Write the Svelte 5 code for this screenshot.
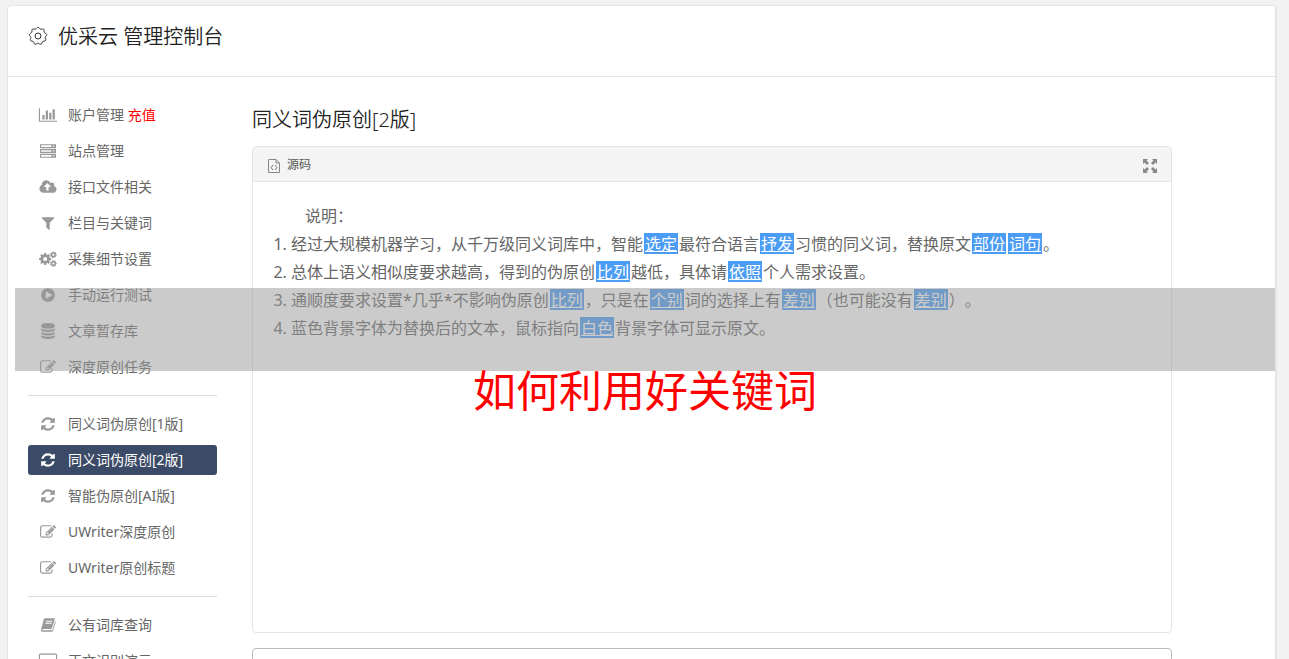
<script lang="ts">
	type Item = { icon: string; label: string; extra?: string; active?: boolean };

	const groups: Item[][] = [
		[
			{ icon: 'chart', label: '账户管理', extra: '充值' },
			{ icon: 'server', label: '站点管理' },
			{ icon: 'cloud', label: '接口文件相关' },
			{ icon: 'filter', label: '栏目与关键词' },
			{ icon: 'cogs', label: '采集细节设置' },
			{ icon: 'play', label: '手动运行测试' },
			{ icon: 'database', label: '文章暂存库' },
			{ icon: 'edit', label: '深度原创任务' }
		],
		[
			{ icon: 'refresh', label: '同义词伪原创[1版]' },
			{ icon: 'refresh', label: '同义词伪原创[2版]', active: true },
			{ icon: 'refresh', label: '智能伪原创[AI版]' },
			{ icon: 'edit', label: 'UWriter深度原创' },
			{ icon: 'edit', label: 'UWriter原创标题' }
		],
		[
			{ icon: 'book', label: '公有词库查询' },
			{ icon: 'desktop', label: '正文识别演示' }
		]
	];

	// odd entries of each line are the replaced words
	const lines = [
		['经过大规模机器学习，从千万级同义词库中，智能', '选定', '最符合语言', '抒发', '习惯的同义词，替换原文', '部份', '', '词句', '。'],
		['总体上语义相似度要求越高，得到的伪原创', '比列', '越低，具体请', '依照', '个人需求设置。'],
		['通顺度要求设置*几乎*不影响伪原创', '比列', '，只是在', '个别', '词的选择上有', '差别', '（也可能没有', '差别', '）。'],
		['蓝色背景字体为替换后的文本，鼠标指向', '白色', '背景字体可显示原文。']
	];

	function gear(cx: number, cy: number, r: number, depth: number, teeth: number, hole: number) {
		const pts: string[] = [];
		const step = (Math.PI * 2) / teeth;
		for (let i = 0; i < teeth; i++) {
			for (const [f, d] of [[-0.32, depth], [-0.2, 0], [0.2, 0], [0.32, depth]]) {
				const a = (i + f) * step;
				pts.push(`${(cx + (r - d) * Math.cos(a)).toFixed(0)} ${(cy + (r - d) * Math.sin(a)).toFixed(0)}`);
			}
		}
		return `M${pts.join('L')}zM${cx - hole} ${cy}a${hole} ${hole} 0 1 0 ${hole * 2} 0a${hole} ${hole} 0 1 0 ${-hole * 2} 0z`;
	}

	const paths: Record<string, string> = {
		chart: 'M512 896v512h-256v-512h256zm384-512v1024h-256v-1024h256zm1024 1152v128h-2048v-1536h128v1408h1920zm-640-896v768h-256v-768h256zm384-384v1152h-256v-1152h256z',
		server: 'M0 128h1792v448h-1792zM128 256v192h1150v-192zM1450 352a85 85 0 1 0 170 0a85 85 0 1 0-170 0zM0 672h1792v448h-1792zM128 800v192h1150v-192zM1450 896a85 85 0 1 0 170 0a85 85 0 1 0-170 0zM0 1216h1792v448h-1792zM128 1344v192h1150v-192zM1450 1440a85 85 0 1 0 170 0a85 85 0 1 0-170 0z',
		cloud: 'M1216 864q0-14-9-23l-352-352q-9-9-23-9t-23 9l-351 351q-10 12-10 24 0 14 9 23t23 9h224v352q0 13 9.500 22.500t22.500 9.500h192q13 0 22.500-9.500t9.500-22.500v-352h224q13 0 22.500-9.500t9.500-22.500zm640 288q0 159-112.500 271.500t-271.500 112.500h-1088q-185 0-316.500-131.500t-131.500-316.500q0-130 70-240t188-165q-2-30-2-43 0-212 150-362t362-150q156 0 285.500 87t188.500 231q71-62 166-62 106 0 181 75t75 181q0 76-41 138 130 31 213.500 135.500t83.500 238.500z',
		filter: 'M1595 295q17 41-14 70l-493 493v742q0 42-39 59-13 5-25 5-27 0-45-19l-256-256q-19-19-19-45v-486l-493-493q-31-29-14-70 17-39 59-39h1280q42 0 59 39z',
		cogs: gear(576, 896, 680, 150, 8, 220) + gear(1500, 430, 380, 80, 7, 120) + gear(1500, 1400, 380, 80, 7, 120),
		play: 'M896 128q209 0 385.500 103t279.500 279.500 103 385.500-103 385.500-279.500 279.500-385.500 103-385.500-103-279.500-279.500-103-385.500 103-385.500 279.500-279.500 385.500-103zm384 823q32-18 32-55t-32-55l-544-320q-31-19-64-1-32 19-32 56v640q0 37 32 56 16 8 32 8 17 0 32-9z',
		database: 'M896 768q237 0 443-43t325-127v170q0 69-103 128t-280 93.500-385 34.500-385-34.500-280-93.500-103-128v-170q119 84 325 127t443 43zm0 768q237 0 443-43t325-127v170q0 69-103 128t-280 93.500-385 34.500-385-34.500-280-93.500-103-128v-170q119 84 325 127t443 43zm0-384q237 0 443-43t325-127v170q0 69-103 128t-280 93.500-385 34.500-385-34.500-280-93.500-103-128v-170q119 84 325 127t443 43zm0-1152q208 0 385 34.500t280 93.500 103 128v128q0 69-103 128t-280 93.500-385 34.500-385-34.500-280-93.500-103-128v-128q0-69 103-128t280-93.500 385-34.500z',
		edit: 'M888 1184l116-116-152-152-116 116v56h96v96h56zm440-720q-16-16-33 1l-350 350q-17 17-1 33t33-1l350-350q17-17 1-33zm80 594v190q0 119-84.500 203.500t-203.500 84.500h-832q-119 0-203.500-84.500t-84.500-203.500v-832q0-119 84.500-203.500t203.500-84.500h832q63 0 117 25 15 7 18 23 3 17-9 29l-49 49q-14 14-32 8-23-6-45-6h-832q-66 0-113 47t-47 113v832q0 66 47 113t113 47h832q66 0 113-47t47-113v-126q0-13 9-22l64-64q15-15 35-7t20 29zm-96-738l288 288-672 672h-288v-288zm444 132l-92 92-288-288 92-92q28-28 68-28t68 28l152 152q28 28 28 68t-28 68z',
		refresh: 'M1639 1056q0 5-1 7-64 268-268 434.500t-478 166.500q-146 0-282.500-55t-243.500-157l-129 129q-19 19-45 19t-45-19-19-45v-448q0-26 19-45t45-19h448q26 0 45 19t19 45-19 45l-137 137q71 66 161 102t187 36q134 0 250-65t186-179q11-17 53-117 8-23 30-23h192q13 0 22.500 9.500t9.500 22.500zm25-800v448q0 26-19 45t-45 19h-448q-26 0-45-19t-19-45 19-45l138-138q-148-137-349-137-134 0-250 65t-186 179q-11 17-53 117-8 23-30 23h-199q-13 0-22.500-9.500t-9.500-22.500v-7q65-268 270-434.500t480-166.500q146 0 284 55.500t245 156.500l130-129q19-19 45-19t45 19 19 45z',
		book: 'M560 128h1010q110 0 75 120l-310 1010q-30 90-130 90h-900q-70 0-55 65 15 60 100 60h970q60 0 85-70l290-960q80 50 50 160l-285 945q-40 116-160 116h-990q-150 0-185-150-20-80 15-190l270-1010q40-186 150-186zM690 430l-30 96h700l30-96zM620 650l-30 96h700l30-96z',
		desktop: 'M32 64h1728q160 0 160 160v1152q0 160-160 160h-1728q-160 0-160-160v-1152q0-160 160-160zm0 128q-32 0-32 32v1152q0 32 32 32h1728q32 0 32-32v-1152q0-32-32-32z'
	};

	// outlined cog with rounded lobes
	function cogOutline(lobes: number) {
		const pts: string[] = [];
		for (let i = 0; i < 72; i++) {
			const a = (i / 72) * Math.PI * 2;
			const r = 8 + 0.8 * Math.cos(lobes * (a + Math.PI / 2));
			pts.push(`${(10 + r * Math.cos(a)).toFixed(2)} ${(10 + r * Math.sin(a)).toFixed(2)}`);
		}
		return `M${pts.join('L')}z`;
	}
</script>

{#snippet icon(name: string)}
	<svg class="icon" viewBox="-224 0 2240 1792" aria-hidden="true">
		<path d={paths[name]} fill-rule="evenodd" />
	</svg>
{/snippet}

<div class="page">
	<div class="panel">
		<header>
			<svg class="gear" viewBox="0 0 20 20" aria-hidden="true">
				<path d={cogOutline(9)} />
				<circle cx="10" cy="10" r="3" />
			</svg>
			<h1>优采云 管理控制台</h1>
		</header>
		<div class="columns">
			<nav>
				{#each groups as group, i}
					{#if i > 0}<hr />{/if}
					<ul>
						{#each group as item}
							<li>
								<a href="#top" class:active={item.active}>
									{@render icon(item.icon)}
									<span>{item.label}{#if item.extra}{' '}<em>{item.extra}</em>{/if}</span>
								</a>
							</li>
						{/each}
					</ul>
				{/each}
			</nav>
			<main>
				<h2>同义词伪原创[2版]</h2>
				<section class="editor">
					<div class="toolbar">
						<button type="button">
							<svg width="12" height="14" viewBox="0 0 12 14" aria-hidden="true">
								<path d="M1.500 .5H8L11.500 4V13.500H.5V.5zM8 .5V4H11.500" />
								<path class="code" d="M5 6L3 8.500L5 11M7 6L9 8.500L7 11" />
							</svg>
							源码
						</button>
						<button type="button" aria-label="全屏">
							<svg class="expand" width="14" height="14" viewBox="0 0 14 14" aria-hidden="true">
								<path d="M0 0h5L3.500 1.500L6 4L4 6L1.500 3.500L0 5zM14 0v5l-1.500-1.500L10 6L8 4l2.500-2.500L9 0zM0 14V9l1.500 1.500L4 8l2 2l-2.500 2.500L5 14zM14 14H9l1.500-1.500L8 10l2-2l2.500 2.500L14 9z" />
							</svg>
						</button>
					</div>
					<div class="content">
						<p>说明：</p>
						<ol>
							{#each lines as line}
								<li>{#each line as part, i}{#if i % 2}<mark>{part}</mark>{:else}{part}{/if}{/each}</li>
							{/each}
						</ol>
					</div>
				</section>
				<textarea aria-label="原文"></textarea>
			</main>
		</div>
	</div>
	<div class="banner">
		<div class="band"></div>
		<strong>如何利用好关键词</strong>
	</div>
</div>

<style>
	:global(body) {
		margin: 0;
		background: #f2f2f2;
	}

	.page {
		position: relative;
		box-sizing: border-box;
		height: 100vh;
		overflow: hidden;
		padding: 5px 12px 0 7px;
		color: #666;
		font: 14px/30px 'Noto Sans', 'Noto Sans CJK SC', sans-serif;
	}

	.panel {
		border: 1px solid #e5e5e5;
		border-right-width: 2px;
		border-radius: 4px;
		background: #fff;
	}

	header {
		display: flex;
		align-items: flex-start;
		gap: 10px;
		height: 50px;
		padding: 20px 20px 0;
		border-bottom: 1px solid #e5e5e5;
	}

	.gear {
		width: 20px;
		height: 20px;
		fill: none;
		stroke: #333;
	}

	h1,
	h2 {
		margin: 0;
		color: #222;
		font-size: 20px;
		font-weight: 350;
		line-height: 22px;
	}

	.columns {
		display: flex;
		gap: 35px;
		padding: 23px 103px 0 20px;
	}

	nav {
		flex: 0 0 189px;
	}

	nav ul {
		display: flex;
		flex-direction: column;
		gap: 6px;
		margin: 0;
		padding: 0;
		list-style: none;
	}

	nav a {
		display: flex;
		align-items: center;
		gap: 10px;
		padding: 0 10px;
		border-radius: 3px;
		color: #666;
		text-decoration: none;
		white-space: nowrap;
	}

	nav em {
		color: #f00;
		font-style: normal;
	}

	nav .active {
		background: #3b4a66;
		color: #fff;
	}

	.icon {
		width: 20px;
		height: 16px;
		fill: #999;
	}

	.active .icon {
		fill: #fff;
	}

	hr {
		height: 1px;
		margin: 13px 0;
		border: 0;
		background: #ddd;
	}

	main {
		flex: 1;
		min-width: 0;
	}

	h2 {
		padding: 9px 0 15px;
	}

	.editor {
		border: 1px solid #e5e5e5;
		border-radius: 4px;
	}

	.toolbar {
		display: flex;
		justify-content: space-between;
		height: 34px;
		padding: 0 14px 0 15px;
		border-bottom: 1px solid #e5e5e5;
		background: #f4f4f4;
	}

	button {
		display: flex;
		align-items: center;
		gap: 7px;
		padding: 2px 0 0;
		border: 0;
		background: none;
		color: #555;
		font: inherit;
		font-size: 12px;
	}

	button svg {
		margin-top: 2px;
		fill: none;
		stroke: #888;
	}

	.code {
		stroke: #777;
	}

	button .expand {
		fill: #888;
		stroke: none;
	}

	.content {
		min-height: 410px;
		padding: 20px;
		font-size: 16px;
		line-height: 28px;
		text-spacing-trim: space-all;
	}

	p {
		margin: 0;
		text-indent: 2em;
	}

	ol {
		margin: 0;
		padding-left: 18px;
	}

	mark {
		display: inline-block;
		margin: 0 1px;
		padding: 2px 1px 0;
		background: #4b9cf5;
		color: #fff;
		line-height: 19px;
		text-decoration: underline;
	}

	textarea {
		display: block;
		box-sizing: border-box;
		width: 100%;
		height: 120px;
		margin-top: 15px;
		border: 1px solid #bbb;
		border-radius: 4px;
		resize: none;
	}

	.banner {
		position: absolute;
		top: 288px;
		right: 14px;
		left: 15px;
		color: #f00;
		text-align: center;
		pointer-events: none;
	}

	.band {
		height: 83px;
		background: rgba(151, 151, 151, 0.5);
	}

	strong {
		display: block;
		font-size: 43px;
		font-weight: 400;
		line-height: 40px;
	}
</style>
